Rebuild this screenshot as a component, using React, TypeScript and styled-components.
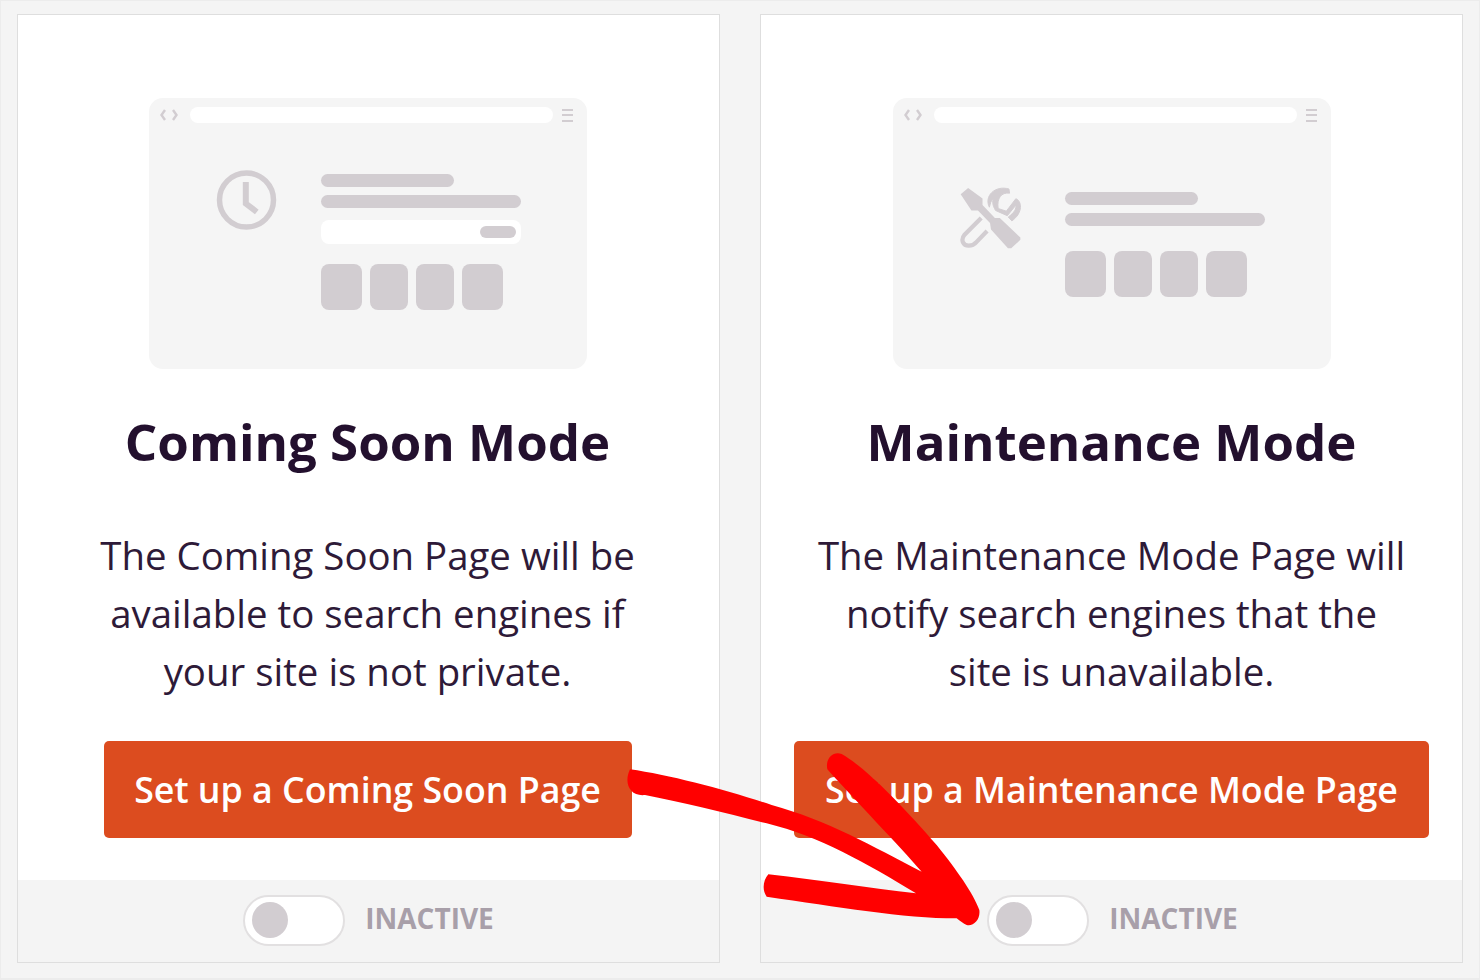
import React from "react";
import styled, { createGlobalStyle } from "styled-components";

const GlobalStyle = createGlobalStyle`
  html, body {
    margin: 0;
    padding: 0;
    background: #f4f4f4;
  }
  * {
    box-sizing: border-box;
  }
`;

const Page = styled.div`
  position: relative;
  width: 1480px;
  height: 980px;
  overflow: hidden;
  padding: 13px 16px 15px;
  border: 1px solid #ececec;
  border-bottom-width: 2px;
  background: #f4f4f4;
  display: grid;
  grid-template-columns: 703px 703px;
  column-gap: 40px;
  font-family: "Open Sans", "Liberation Sans", sans-serif;
`;

const Card = styled.section`
  display: flex;
  flex-direction: column;
  border: 1px solid #dedede;
  background: #fff;
`;

const CardBody = styled.div<{ $inset: number }>`
  display: flex;
  flex-direction: column;
  align-items: center;
  padding-right: ${(p) => p.$inset}px;
`;

const Mock = styled.div`
  width: 438px;
  height: 271px;
  margin-top: 83px;
  padding-top: 9px;
  border-radius: 14px;
  background: #f5f5f5;
`;

const MockBar = styled.div`
  display: flex;
  align-items: center;
  height: 16px;
  padding: 0 14px 0 11px;
`;

const Arrows = styled.svg`
  width: 18px;
  height: 12px;
  flex: none;
  margin-right: 12px;
`;

const AddressBar = styled.div`
  flex: 1;
  height: 16px;
  border-radius: 8px;
  background: #fff;
`;

const Burger = styled.div`
  flex: none;
  width: 11px;
  height: 13px;
  margin-left: 9px;
  background: linear-gradient(#d2cdd1 0 2px, transparent 2px 5px, #d2cdd1 5px 7px, transparent 7px 11px, #d2cdd1 11px 13px);
`;

const MockBody = styled.div<{ $top: number }>`
  display: flex;
  align-items: flex-start;
  padding: ${(p) => p.$top}px 0 0 67px;
`;

const IconSlot = styled.svg<{ $shift: number }>`
  flex: none;
  width: 62px;
  height: 62px;
  margin: ${(p) => p.$shift}px 43px 0 0;
`;

const Lines = styled.div`
  display: flex;
  flex-direction: column;
  width: 200px;
`;

const Line = styled.div<{ $short?: boolean }>`
  width: ${(p) => (p.$short ? "133px" : "200px")};
  height: 13px;
  margin-bottom: 8px;
  border-radius: 7px;
  background: #d2cdd1;
`;

const SearchBox = styled.div`
  display: flex;
  align-items: center;
  justify-content: flex-end;
  height: 24px;
  margin: 4px 0 20px;
  padding-right: 5px;
  border-radius: 8px;
  background: #fff;
`;

const SearchPill = styled.div`
  width: 36px;
  height: 12px;
  border-radius: 6px;
  background: #d2cdd1;
`;

const Tiles = styled.div<{ $gapTop: number }>`
  display: flex;
  gap: 8px;
  margin-top: ${(p) => p.$gapTop}px;
`;

const Tile = styled.div<{ $wide?: boolean }>`
  width: ${(p) => (p.$wide ? "41px" : "38px")};
  height: 46px;
  border-radius: 8px;
  background: #d2cdd1;
`;

const Title = styled.h2`
  margin: 38px 0 0;
  font-size: 51px;
  line-height: 68px;
  font-weight: 700;
  color: #23102e;
  white-space: nowrap;
`;

const Description = styled.p`
  margin: 51px 0 0;
  font-size: 38.4px;
  line-height: 58px;
  font-weight: 400;
  text-align: center;
  color: #2e1a38;
  white-space: nowrap;
`;

const SetupButton = styled.button<{ $width: number }>`
  width: ${(p) => p.$width}px;
  height: 97px;
  margin-top: 41px;
  padding: 0 0 2px;
  border: 0;
  border-radius: 5px;
  background: #dc4c1f;
  color: #fff;
  font-family: inherit;
  font-size: 35.75px;
  font-weight: 600;
  white-space: nowrap;
`;

const Footer = styled.div<{ $lead: number }>`
  display: flex;
  align-items: center;
  justify-content: center;
  gap: 20px;
  height: 82px;
  margin-top: auto;
  padding: 0 0 2px ${(p) => p.$lead}px;
  background: #f4f4f4;
`;

const Toggle = styled.div`
  display: flex;
  align-items: center;
  width: 102px;
  height: 51px;
  padding-left: 7px;
  border: 2px solid #e2e0e1;
  border-radius: 26px;
  background: #fff;
`;

const Knob = styled.div`
  width: 36px;
  height: 36px;
  border-radius: 50%;
  background: #d2cdd1;
`;

const Status = styled.span`
  margin-top: -4px;
  font-size: 28px;
  font-weight: 700;
  color: #a89fa9;
`;

const Scribble = styled.svg`
  position: absolute;
  left: 619px;
  top: 729px;
  width: 400px;
  height: 250px;
  pointer-events: none;
`;

const ChevronPair = () => (
  <Arrows viewBox="0 0 18 12" fill="none" stroke="#d2cdd1" strokeWidth="2.400">
    <path d="M5 1 1.500 6 5 11" />
    <path d="M13 1l3.500 5L13 11" />
  </Arrows>
);

const ClockIcon = () => (
  <IconSlot $shift={-4} viewBox="0 0 62 62" fill="none" stroke="#d2cdd1" strokeWidth="5.500">
    <circle cx="30.500" cy="30" r="27" />
    <path d="M29.800 12v21.500l11 8.500" strokeWidth="6" />
  </IconSlot>
);

const ToolsIcon = () => (
  <IconSlot $shift={-5} viewBox="225 290 186 190" fill="#d2cdd1">
    <path d="M225 312 248 293 292 325V345L330 385H345L408 445V452L380 478H370L318 420 315 400 278 362H258Z" />
    <path
      d="M288 385 237 436C224 452 232 470 250 470 262 470 268 465 274 458L306 425"
      fill="none"
      stroke="#d2cdd1"
      strokeWidth="13"
    />
    <path
      d="M313 352C296 318 330 284 373 296L375 309C350 305 335 325 340 356L365 364 394 326C412 332 418 368 382 394L371 382C390 368 396 356 394 346L368 378 332 362C322 345 322 335 325 325 317 332 316 342 313 352Z"
      stroke="#d2cdd1"
      strokeWidth="3"
    />
  </IconSlot>
);

const modes = [
  {
    title: "Coming Soon Mode",
    lines: ["The Coming Soon Page will be", "available to search engines if", "your site is not private."],
    button: "Set up a Coming Soon Page",
    buttonWidth: 528,
    icon: <ClockIcon />,
    bodyTop: 51,
    withSearch: true,
    inset: 2,
    lead: 0,
  },
  {
    title: "Maintenance Mode",
    lines: ["The Maintenance Mode Page will", "notify search engines that the", "site is unavailable."],
    button: "Set up a Maintenance Mode Page",
    buttonWidth: 635,
    icon: <ToolsIcon />,
    bodyTop: 69,
    withSearch: false,
    inset: 0,
    lead: 2,
  },
];

export default function App() {
  return (
    <>
      <GlobalStyle />
      <Page>
        {modes.map((mode) => (
          <Card key={mode.title}>
            <CardBody $inset={mode.inset}>
              <Mock>
                <MockBar>
                  <ChevronPair />
                  <AddressBar />
                  <Burger />
                </MockBar>
                <MockBody $top={mode.bodyTop}>
                  {mode.icon}
                  <Lines>
                    <Line $short />
                    <Line />
                    {mode.withSearch && (
                      <SearchBox>
                        <SearchPill />
                      </SearchBox>
                    )}
                    <Tiles $gapTop={mode.withSearch ? 0 : 17}>
                      <Tile $wide />
                      <Tile />
                      <Tile />
                      <Tile $wide />
                    </Tiles>
                  </Lines>
                </MockBody>
              </Mock>
              <Title>{mode.title}</Title>
              <Description>
                {mode.lines.map((line) => (
                  <React.Fragment key={line}>
                    {line}
                    <br />
                  </React.Fragment>
                ))}
              </Description>
              <SetupButton $width={mode.buttonWidth}>{mode.button}</SetupButton>
            </CardBody>
            <Footer $lead={mode.lead}>
              <Toggle>
                <Knob />
              </Toggle>
              <Status>INACTIVE</Status>
            </Footer>
          </Card>
        ))}
        <Scribble viewBox="0 0 1200 750" fill="#ff0000">
          <path d="M30 118C150 135 320 180 455 225 620 270 760 350 905 425 840 350 700 205 622 118 615 85 640 62 665 72 740 115 850 230 950 345 1010 420 1060 490 1078 540 1082 570 1060 590 1040 585 1030 582 1020 572 1010 565 850 565 650 530 440 500 425 480 430 450 445 433 600 450 750 475 888 490 740 400 600 320 440 280 320 250 180 215 75 195 30 200 10 160 30 118Z" />
        </Scribble>
      </Page>
    </>
  );
}
